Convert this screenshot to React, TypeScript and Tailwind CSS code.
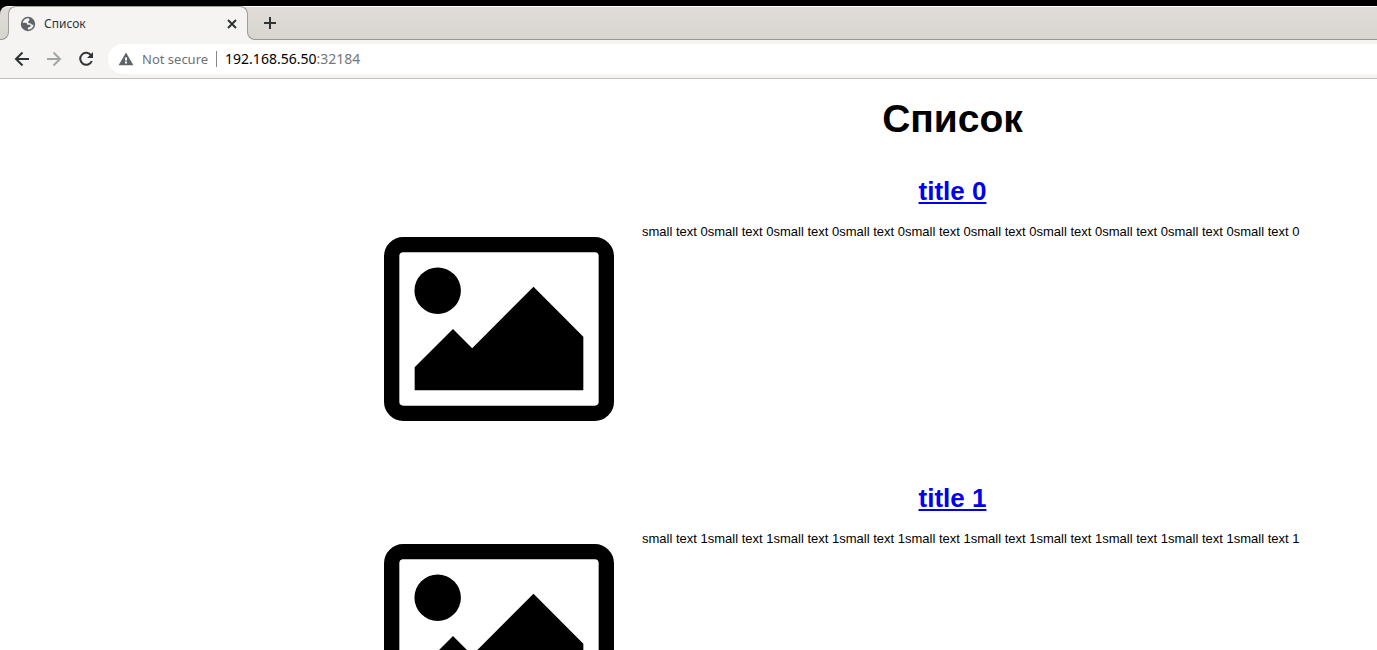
import type { ReactNode } from "react";

type Item = { title: string; text: string };

const items: Item[] = [0, 1].map((n) => ({
  title: `title ${n}`,
  text: `small text ${n}`.repeat(10),
}));

function LineIcon({ children }: { children: ReactNode }) {
  return (
    <svg viewBox="0 0 20 20" className="size-5" fill="none" stroke="currentColor" strokeWidth="2" aria-hidden="true">
      {children}
    </svg>
  );
}

function GlobeIcon() {
  return (
    <svg viewBox="0 0 16 16" className="size-4" aria-hidden="true">
      <circle cx="8" cy="8" r="7.2" fill="#5f6368" />
      <path
        d="M9.2 2.4C6.2 1.9 3.2 3.8 2.5 6.8H5.2C6.6 6.8 7.3 7.6 7.2 8.8H9.8C10.6 8.8 10.9 9.6 10.6 10.3C10 11.4 8 11 7.8 12.2V13.6C10.8 13.7 13.4 11.4 13.6 8.4C12.6 8.9 11.3 8.6 11 7.4C10 7.5 8.4 7.4 8.2 6.3C8 5.3 8.8 5 9.4 4.6C9.8 4.1 9.1 3.3 9.2 2.4Z"
        fill="#f5f4f2"
      />
    </svg>
  );
}

function WarningIcon() {
  return (
    <svg viewBox="0 0 16 16" className="size-4" aria-hidden="true">
      <path d="M8 1.5L15.4 14.2H.6Z" fill="#5f6368" />
      <path d="M7 6.4H9V9.4H7ZM7 10.6H9V12.4H7Z" fill="#fff" />
    </svg>
  );
}

function Picture() {
  return (
    <svg viewBox="0 0 1920 1536" className="w-[230px] shrink-0" role="img" aria-label="Picture">
      <path
        fillRule="evenodd"
        d="M160 0H1760Q1826 0 1873 47T1920 160V1376Q1920 1442 1873 1489T1760 1536H160Q94 1536 47 1489T0 1376V160Q0 94 47 47T160 0ZM160 128Q128 128 128 160V1376Q128 1408 160 1408H1760Q1792 1408 1792 1376V160Q1792 128 1760 128Z"
      />
      <circle cx="448" cy="448" r="194" />
      <path d="M1664 832V1280H256V1088L576 768L736 928L1248 416Z" />
    </svg>
  );
}

function TabStrip() {
  return (
    <div className="flex h-[34px] rounded-tl-lg border-t border-white bg-linear-to-b from-[#e1dcd9] to-[#d8d6cf] pl-2 shadow-[inset_0_-1px_0_#96978e]">
      <div className="relative -mt-px flex w-60 items-center rounded-t-lg border-x border-t border-[#a09f98] bg-[#f5f4f2] pr-[5px] pl-[11px]">
        <span className="absolute bottom-0 -left-[9px] h-2 w-[9px] bg-[#f5f4f2]">
          <span className="block h-2 rounded-br-lg border-r border-b border-[#96978e] bg-[#d9d6d1]" />
        </span>
        <span className="absolute -right-[9px] bottom-0 h-2 w-[9px] bg-[#f5f4f2]">
          <span className="block h-2 rounded-bl-lg border-b border-l border-[#96978e] bg-[#d9d6d1]" />
        </span>
        <GlobeIcon />
        <span className="ml-2 flex-1 text-xs text-[#2e3436]">Список</span>
        <button aria-label="Close tab" className="text-[#2e3436]">
          <LineIcon><path d="M6 6L14 14M14 6L6 14" /></LineIcon>
        </button>
      </div>
      <button aria-label="New tab" className="ml-3 pb-0.5 text-[#2e3436]">
        <LineIcon><path d="M10 4V16M4 10H16" /></LineIcon>
      </button>
    </div>
  );
}

function Toolbar() {
  return (
    <div className="flex h-[39px] items-center border-b border-[#c1bfb8] bg-[#f5f4f2] pl-3 text-[#2e3436]">
      <button aria-label="Back"><LineIcon><path d="M17 10H4M10.5 3.5L4 10L10.5 16.5" /></LineIcon></button>
      <button aria-label="Forward" className="ml-3 text-[#a3a4a4]"><LineIcon><path d="M3 10H16M9.5 3.5L16 10L9.5 16.5" /></LineIcon></button>
      <button aria-label="Reload" className="ml-3">
        <LineIcon>
          <path d="M15.2 6.5A6 6 0 1 0 15.8 12" />
          <path d="M17 3V9H11Z" fill="currentColor" stroke="none" />
        </LineIcon>
      </button>
      <div className="ml-3 flex h-[30px] flex-1 items-center rounded-l-full bg-white pl-2.5 text-sm">
        <WarningIcon />
        <span className="ml-2 text-[13px] text-[#6e7175]">Not secure</span>
        <span className="mx-2 h-4 w-px bg-[#85888b]" />
        <a href="#top" className="text-black">
          192.168.56.50<span className="text-[#777]">:32184</span>
        </a>
      </div>
    </div>
  );
}

export default function App() {
  return (
    <div id="top" className="h-screen overflow-hidden bg-white">
      <header className="bg-black pt-1.5 font-['Noto_Sans',sans-serif]">
        <TabStrip />
        <Toolbar />
      </header>
      <main className="pl-[384px] font-['Liberation_Sans',Arial,sans-serif] text-[13px] leading-[15px] text-black">
        <h1 className="pt-[18px] pl-36 text-center text-[39px] leading-[44px] font-bold">Список</h1>
        {items.map((item) => (
          <article key={item.title} className="h-[307px] pt-[35px]">
            <h2 className="pl-36 text-center text-[26px] leading-[30px] font-bold">
              <a href="#top" className="text-[#0000ee] underline">{item.title}</a>
            </h2>
            <div className="mt-[18px] flex items-start gap-7">
              <div className="pt-[13px]"><Picture /></div>
              <p>{item.text}</p>
            </div>
          </article>
        ))}
      </main>
    </div>
  );
}
